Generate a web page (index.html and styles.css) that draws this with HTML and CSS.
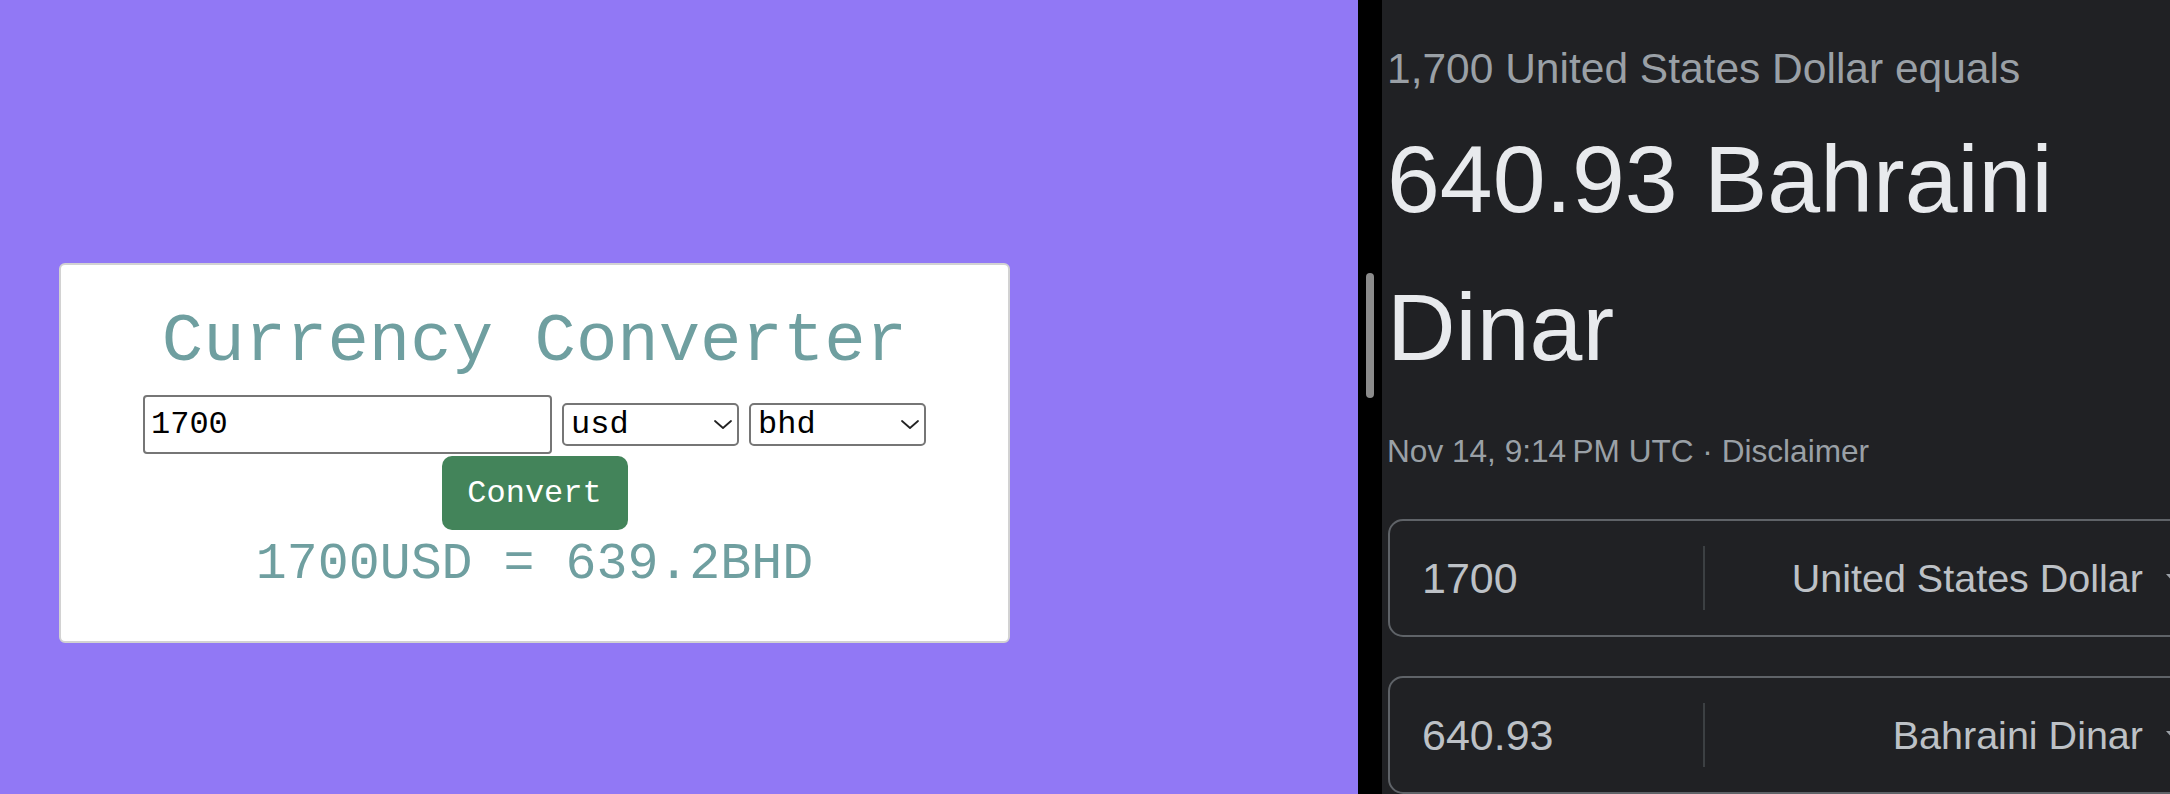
FILE: index.html
```html
<!DOCTYPE html>
<html lang="en">
<head>
<meta charset="utf-8">
<title>Currency Converter</title>
<link rel="stylesheet" href="styles.css">
</head>
<body>
<div class="screen">
  <main class="app">
    <section class="card">
      <h1 class="title">Currency Converter</h1>
      <div class="controls">
        <input class="amount" type="text" value="1700">
        <div class="select-wrap">
          <select class="currency"><option>usd</option></select>
          <svg class="chev" width="18" height="9" viewBox="0 0 18 9"><path d="M1 1 L9 8 L17 1" fill="none" stroke="#222" stroke-width="1.8" stroke-linecap="round" stroke-linejoin="round"/></svg>
        </div>
        <div class="select-wrap">
          <select class="currency"><option>bhd</option></select>
          <svg class="chev" width="18" height="9" viewBox="0 0 18 9"><path d="M1 1 L9 8 L17 1" fill="none" stroke="#222" stroke-width="1.8" stroke-linecap="round" stroke-linejoin="round"/></svg>
        </div>
      </div>
      <button class="convert" type="button">Convert</button>
      <p class="result">1700USD = 639.2BHD</p>
    </section>
  </main>
  <div class="gutter"><div class="thumb"></div></div>
  <aside class="google">
    <div class="equals">1,700 United States Dollar equals</div>
    <div class="big">640.93 Bahraini Dinar</div>
    <div class="meta">Nov 14, 9:14&#8239;PM UTC · Disclaimer</div>
    <div class="field first">
      <div class="num">1700</div>
      <div class="divider"></div>
      <div class="cur"><span>United States Dollar</span><svg class="caret" width="14" height="8" viewBox="0 0 14 8"><path d="M0 0H14L7 8Z" fill="#9aa0a6"/></svg></div>
    </div>
    <div class="field second">
      <div class="num">640.93</div>
      <div class="divider"></div>
      <div class="cur"><span>Bahraini Dinar</span><svg class="caret" width="14" height="8" viewBox="0 0 14 8"><path d="M0 0H14L7 8Z" fill="#9aa0a6"/></svg></div>
    </div>
  </aside>
</div>
</body>
</html>
```
FILE: styles.css
```css
html, body {
  margin: 0;
  padding: 0;
}
body {
  width: 2170px;
  height: 794px;
  overflow: hidden;
}
.screen {
  display: flex;
  height: 794px;
}

/* left app */
.app {
  width: 1358px;
  flex-shrink: 0;
  background: #9178f5;
  padding: 263px 0 0 59px;
  box-sizing: border-box;
}
.card {
  width: 951px;
  height: 380px;
  box-sizing: border-box;
  background: #ffffff;
  border: 2px solid #d2d2d2;
  border-radius: 6px;
  padding-top: 38px;
  display: flex;
  flex-direction: column;
  align-items: center;
  font-family: "Courier New", "Nimbus Mono PS", "FreeMono", "Liberation Mono", monospace;
}
.title {
  margin: 0;
  font-size: 69px;
  line-height: 78px;
  font-weight: normal;
  color: #6f9fa0;
  white-space: nowrap;
}
.controls {
  margin-top: 14px;
  display: flex;
  align-items: center;
  gap: 10px;
}
.amount {
  width: 409px;
  height: 59px;
  box-sizing: border-box;
  border: 2px solid #767676;
  border-radius: 4px;
  padding: 0 6px;
  margin: 0;
  font-family: "Courier New", "Nimbus Mono PS", "FreeMono", "Liberation Mono", monospace;
  font-size: 32px;
  color: #000;
  background: #fff;
  outline: none;
}
.select-wrap {
  position: relative;
  width: 177px;
  height: 43px;
}
.currency {
  -webkit-appearance: none;
  appearance: none;
  width: 177px;
  height: 43px;
  box-sizing: border-box;
  border: 2px solid #767676;
  border-radius: 5px;
  padding: 0 7px;
  margin: 0;
  font-family: "Courier New", "Nimbus Mono PS", "FreeMono", "Liberation Mono", monospace;
  font-size: 32px;
  color: #000;
  background: #fff;
  outline: none;
}
.chev {
  position: absolute;
  right: 7px;
  top: 17px;
  pointer-events: none;
}
.convert {
  margin-top: 2px;
  width: 186px;
  height: 74px;
  border: none;
  border-radius: 10px;
  background: #43845a;
  color: #ffffff;
  font-family: "Courier New", "Nimbus Mono PS", "FreeMono", "Liberation Mono", monospace;
  font-size: 32px;
  padding: 0;
}
.result {
  margin: 4px 0 0;
  font-size: 51.6px;
  line-height: 60px;
  color: #6f9fa0;
  white-space: nowrap;
}

/* gutter with scrollbar */
.gutter {
  width: 24px;
  flex-shrink: 0;
  background: #000;
  padding: 273px 0 0 8px;
  box-sizing: border-box;
}
.thumb {
  width: 8px;
  height: 125px;
  border-radius: 4px;
  background: #8b8b8b;
}

/* right google panel */
.google {
  flex: 1;
  min-width: 0;
  background: #202124;
  overflow: hidden;
  padding: 41px 0 0 5px;
  box-sizing: border-box;
  font-family: "Liberation Sans", Arial, sans-serif;
}
.equals {
  font-size: 42.5px;
  line-height: 56px;
  color: #9aa0a6;
  white-space: nowrap;
}
.big {
  margin-top: 8px;
  font-size: 95px;
  line-height: 148px;
  color: #e8eaed;
}
.meta {
  margin-top: 30px;
  font-size: 31.6px;
  line-height: 40px;
  color: #9aa0a6;
  white-space: nowrap;
}
.field {
  width: 814px;
  height: 118px;
  box-sizing: border-box;
  margin-left: 1px;
  border: 2px solid #5f6368;
  border-radius: 15px;
  display: flex;
  align-items: center;
}
.field.first {
  margin-top: 48px;
}
.field.second {
  margin-top: 39px;
}
.num {
  width: 313px;
  box-sizing: border-box;
  padding-left: 32px;
  font-size: 43px;
  line-height: 50px;
  color: #bdc1c6;
}
.divider {
  width: 2px;
  height: 64px;
  background: #3c4043;
}
.cur {
  flex: 1;
  display: flex;
  justify-content: flex-end;
  align-items: center;
  padding-right: 20px;
  font-size: 39.5px;
  line-height: 50px;
  color: #bdc1c6;
  white-space: nowrap;
}
.caret {
  margin-left: 23px;
  flex-shrink: 0;
}
```
